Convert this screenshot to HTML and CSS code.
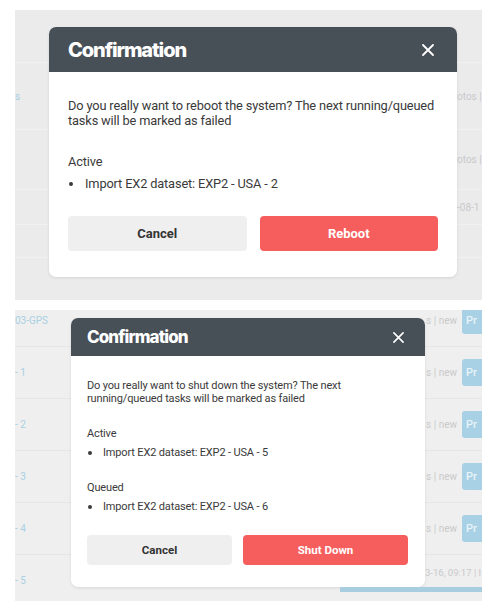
FILE: index.html
```html
<!DOCTYPE html>
<html lang="en">
<head>
  <meta charset="UTF-8">
  <title>Confirmation dialogs</title>
  <link rel="stylesheet" href="styles.css">
</head>
<body>

  <div class="page">

    <!-- reboot dialog screenshot -->
    <div class="shot shot-reboot">
      <div class="backdrop">
        <div class="row r1"></div>
        <div class="row r2"><span class="left">s</span><span class="right">otos |</span></div>
        <div class="row r3"><span class="left"></span><span class="right">otos |</span></div>
        <div class="row r4"><span class="left"></span><span class="right">-08-1</span></div>
        <div class="row r5"></div>
        <div class="row r6"></div>
      </div>

      <div class="dialog dialog-reboot">
        <div class="dialog-head">
          <span class="dialog-title">Confirmation</span>
          <svg class="close" viewBox="0 0 12 12"><path d="M1 1 L11 11 M11 1 L1 11"/></svg>
        </div>
        <div class="dialog-body">
          <p class="msg">Do you really want to reboot the system? The next running/queued tasks will be marked as failed</p>
          <div class="group">
            <div class="group-label">Active</div>
            <ul class="tasks">
              <li>Import EX2 dataset: EXP2 - USA - 2</li>
            </ul>
          </div>
          <div class="actions">
            <button class="btn btn-cancel">Cancel</button>
            <button class="btn btn-danger">Reboot</button>
          </div>
        </div>
      </div>
    </div>

    <!-- shut down dialog screenshot -->
    <div class="shot shot-shutdown">
      <div class="backdrop">
        <div class="row"><span class="left">03-GPS</span><span class="right">s | new</span><span class="pill">Pr</span></div>
        <div class="row"><span class="left">- 1</span><span class="right">s | new</span><span class="pill">Pr</span></div>
        <div class="row"><span class="left">- 2</span><span class="right">s | new</span><span class="pill">Pr</span></div>
        <div class="row"><span class="left">- 3</span><span class="right">s | new</span><span class="pill">Pr</span></div>
        <div class="row"><span class="left">- 4</span><span class="right">s | new</span><span class="pill">Pr</span></div>
        <div class="row last"><span class="left">- 5</span><span class="right date">3-16, 09:17 | I</span><span class="bar"></span></div>
      </div>

      <div class="dialog dialog-shutdown">
        <div class="dialog-head">
          <span class="dialog-title">Confirmation</span>
          <svg class="close" viewBox="0 0 12 12"><path d="M1 1 L11 11 M11 1 L1 11"/></svg>
        </div>
        <div class="dialog-body">
          <p class="msg">Do you really want to shut down the system? The next running/queued tasks will be marked as failed</p>
          <div class="group">
            <div class="group-label">Active</div>
            <ul class="tasks">
              <li>Import EX2 dataset: EXP2 - USA - 5</li>
            </ul>
          </div>
          <div class="group">
            <div class="group-label">Queued</div>
            <ul class="tasks">
              <li>Import EX2 dataset: EXP2 - USA - 6</li>
            </ul>
          </div>
          <div class="actions">
            <button class="btn btn-cancel">Cancel</button>
            <button class="btn btn-danger">Shut Down</button>
          </div>
        </div>
      </div>
    </div>

  </div>

</body>
</html>
```

FILE: styles.css
```css
:root {
  --head: #474f57;
  --text: #3a3a3a;
  --danger: #f65e5e;
  --muted-btn: #efefef;
  --faint-blue: #a9cfe2;
  --faint-gray: #c9c9c9;
}

html, body {
  margin: 0;
  padding: 0;
  background: #fff;
  font-family: Roboto, "Noto Sans", sans-serif;
  color: var(--text);
}

.page {
  display: flex;
  flex-direction: column;
  gap: 10px;
  padding: 10px 11px 0 15px;
}

/* each screenshot: backdrop and dialog share one grid cell */
.shot {
  display: grid;
  width: 467px;
  overflow: hidden;
}

.shot > * {
  grid-area: 1 / 1;
}

.backdrop {
  display: flex;
  flex-direction: column;
  overflow: hidden;
  font-size: 10px;
}

.row {
  display: flex;
  align-items: center;
  border-bottom: 1px solid #f3f3f3;
  box-sizing: border-box;
}

.row .left {
  color: var(--faint-blue);
  flex: 1;
}

.row .right {
  color: var(--faint-gray);
  white-space: nowrap;
}

/* reboot backdrop */
.shot-reboot {
  height: 290px;
}

.shot-reboot .backdrop {
  background: #ebebec;
}

.shot-reboot .row {
  border-bottom-color: #f1f1f2;
}

.shot-reboot .r1 { height: 53px; }
.shot-reboot .r2 { height: 67px; }
.shot-reboot .r3 { height: 60px; }
.shot-reboot .r4 { height: 35px; }
.shot-reboot .r5 { height: 33px; }
.shot-reboot .r6 { flex: 1; border-bottom: 0; }

.shot-reboot .right {
  font-size: 10px;
  width: 25px;
}

/* shut down backdrop */
.shot-shutdown {
  height: 291px;
}

.shot-shutdown .backdrop {
  background: #efeff0;
}

.shot-shutdown .row {
  height: 52px;
  flex: none;
  border-bottom-color: #e6e6e7;
}

.shot-shutdown .row:first-child {
  margin-top: -15px;
}

.shot-shutdown .row.last {
  border-bottom: 0;
  position: relative;
  align-items: flex-start;
}

.shot-shutdown .row.last .left {
  padding-top: 20px;
}

.shot-shutdown .right {
  width: 32px;
  text-align: right;
}

.shot-shutdown .right.date {
  width: 57px;
  text-align: left;
  font-size: 9.5px;
  padding-top: 12px;
}

.pill {
  width: 20px;
  height: 27px;
  margin-left: 5px;
  border-radius: 3px 0 0 3px;
  background: #a8d1e5;
  color: #e8f4fa;
  font-size: 11px;
  font-weight: 500;
  line-height: 27px;
  padding-left: 4px;
  box-sizing: border-box;
}

.bar {
  position: absolute;
  left: 325px;
  right: 0;
  bottom: 15px;
  height: 5px;
  background: #a8cde0;
}

/* dialog */
.dialog {
  align-self: start;
  justify-self: start;
  background: #fff;
  border-radius: 7px;
  overflow: hidden;
  box-shadow: 0 1px 3px rgba(0, 0, 0, 0.1);
}

.dialog-head {
  display: flex;
  align-items: center;
  justify-content: space-between;
  background: var(--head);
  color: #fff;
}

.dialog-title {
  font-family: Inter, Roboto, sans-serif;
  font-weight: 800;
}

.close {
  fill: none;
  stroke: #fff;
  stroke-width: 1.8;
  stroke-linecap: round;
}

.msg {
  margin: 0;
}

.tasks {
  list-style: none;
  margin: 0;
  padding: 0;
}

.tasks li {
  display: flex;
  align-items: center;
}

.tasks li::before {
  content: "";
  width: 4px;
  height: 4px;
  border-radius: 50%;
  background: var(--text);
  flex: none;
}

.actions {
  display: flex;
}

.btn {
  border: 0;
  border-radius: 4px;
  font-family: inherit;
  font-weight: 700;
  cursor: pointer;
}

.btn-cancel {
  background: var(--muted-btn);
  color: #333;
}

.btn-danger {
  background: var(--danger);
  color: #fff;
}

/* reboot dialog sizes */
.dialog-reboot {
  width: 408px;
  margin: 17px 0 0 34px;
}

.dialog-reboot .dialog-head {
  height: 45px;
  padding: 0 23px 0 19px;
}

.dialog-reboot .dialog-title {
  font-size: 20px;
  letter-spacing: -1.1px;
}

.dialog-reboot .close {
  width: 12px;
  height: 12px;
}

.dialog-reboot .dialog-body {
  padding: 26px 17px 26px 19px;
  font-size: 12.8px;
  line-height: 15px;
  letter-spacing: -0.15px;
}

.dialog-reboot .group {
  margin-top: 26px;
}

.dialog-reboot .tasks {
  margin-top: 7px;
}

.dialog-reboot .tasks li::before {
  margin: 0 12px 0 1px;
}

.dialog-reboot .actions {
  margin-top: 25px;
  gap: 13px;
  margin-right: 2px;
}

.dialog-reboot .btn {
  flex: 1;
  height: 35px;
  font-size: 13px;
  letter-spacing: 0;
}

/* shut down dialog sizes */
.dialog-shutdown {
  width: 354px;
  margin: 8px 0 0 56px;
}

.dialog-shutdown .dialog-head {
  height: 38px;
  padding: 0 21px 0 16px;
}

.dialog-shutdown .dialog-title {
  font-size: 17px;
  letter-spacing: -0.9px;
}

.dialog-shutdown .close {
  width: 11px;
  height: 11px;
}

.dialog-shutdown .dialog-body {
  padding: 23px 17px 22px 16px;
  font-size: 11px;
  line-height: 13px;
  letter-spacing: -0.15px;
}

.dialog-shutdown .msg {
  max-width: 290px;
}

.dialog-shutdown .group {
  margin-top: 22px;
}

.dialog-shutdown .tasks {
  margin-top: 6px;
}

.dialog-shutdown .tasks li::before {
  margin: 0 11px 0 1px;
}

.dialog-shutdown .actions {
  margin-top: 22px;
  gap: 11px;
}

.dialog-shutdown .btn {
  height: 30px;
  font-size: 11.5px;
  letter-spacing: 0;
}

.dialog-shutdown .btn-cancel {
  width: 145px;
}

.dialog-shutdown .btn-danger {
  width: 165px;
}
```
